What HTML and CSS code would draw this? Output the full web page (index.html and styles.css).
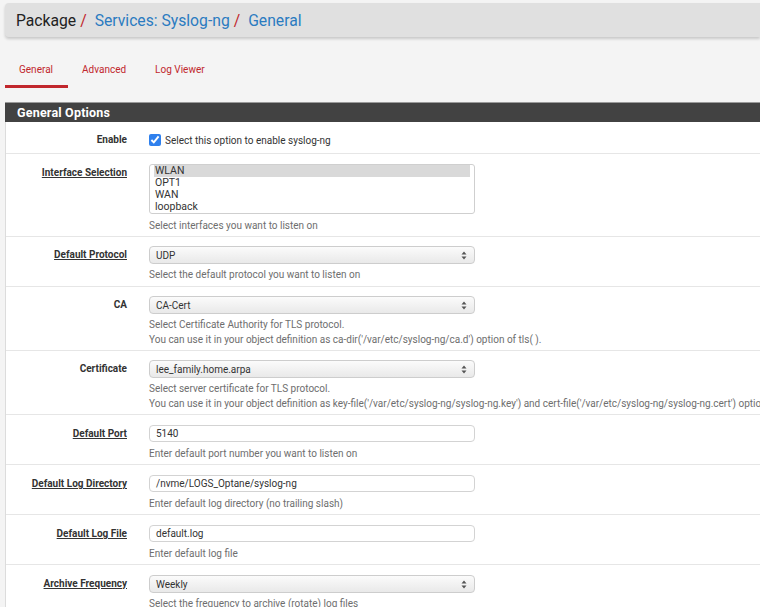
FILE: index.html
```html
<!DOCTYPE html>
<html lang="en">
<head>
<meta charset="utf-8">
<title>Services: Syslog-ng: General</title>
<link rel="stylesheet" href="styles.css">
</head>
<body>
<div class="page">
  <div class="crumbs">
    <span class="crumb plain">Package</span><span class="sep">/</span>
    <a class="crumb" href="#">Services: Syslog-ng</a><span class="sep">/</span>
    <a class="crumb" href="#">General</a>
  </div>

  <ul class="tabs">
    <li class="tab active"><a href="#">General</a></li>
    <li class="tab"><a href="#">Advanced</a></li>
    <li class="tab"><a href="#">Log Viewer</a></li>
  </ul>

  <div class="panel">
    <div class="panel-head">General Options</div>
    <div class="panel-body">
      <div class="row">
        <div class="label">Enable</div>
        <div class="ctrl">
          <label class="check"><input type="checkbox" checked> Select this option to enable syslog-ng</label>
        </div>
      </div>

      <div class="row row-list">
        <div class="label"><span class="u">Interface Selection</span></div>
        <div class="ctrl">
          <div class="listbox" role="listbox">
            <div class="opt sel">WLAN</div>
            <div class="opt">OPT1</div>
            <div class="opt">WAN</div>
            <div class="opt">loopback</div>
          </div>
          <div class="help">Select interfaces you want to listen on</div>
        </div>
      </div>

      <div class="row">
        <div class="label"><span class="u">Default Protocol</span></div>
        <div class="ctrl">
          <div class="select"><span>UDP</span><svg class="arr" width="6" height="9" viewBox="0 0 6 9"><path d="M3 0.5 L5.5 3.5 H0.5 Z M3 8.5 L5.5 5.5 H0.5 Z" fill="#555"/></svg></div>
          <div class="help">Select the default protocol you want to listen on</div>
        </div>
      </div>

      <div class="row row-two">
        <div class="label">CA</div>
        <div class="ctrl">
          <div class="select"><span>CA-Cert</span><svg class="arr" width="6" height="9" viewBox="0 0 6 9"><path d="M3 0.5 L5.5 3.5 H0.5 Z M3 8.5 L5.5 5.5 H0.5 Z" fill="#555"/></svg></div>
          <div class="help">Select Certificate Authority for TLS protocol.<br>You can use it in your object definition as ca-dir('/var/etc/syslog-ng/ca.d') option of tls( ).</div>
        </div>
      </div>

      <div class="row row-two">
        <div class="label">Certificate</div>
        <div class="ctrl">
          <div class="select"><span>lee_family.home.arpa</span><svg class="arr" width="6" height="9" viewBox="0 0 6 9"><path d="M3 0.5 L5.5 3.5 H0.5 Z M3 8.5 L5.5 5.5 H0.5 Z" fill="#555"/></svg></div>
          <div class="help">Select server certificate for TLS protocol.<br>You can use it in your object definition as key-file('/var/etc/syslog-ng/syslog-ng.key') and cert-file('/var/etc/syslog-ng/syslog-ng.cert') option of tls( ).</div>
        </div>
      </div>

      <div class="row row-input">
        <div class="label"><span class="u">Default Port</span></div>
        <div class="ctrl">
          <div class="input">5140</div>
          <div class="help">Enter default port number you want to listen on</div>
        </div>
      </div>

      <div class="row row-input">
        <div class="label"><span class="u">Default Log Directory</span></div>
        <div class="ctrl">
          <div class="input">/nvme/LOGS_Optane/syslog-ng</div>
          <div class="help">Enter default log directory (no trailing slash)</div>
        </div>
      </div>

      <div class="row row-input">
        <div class="label"><span class="u">Default Log File</span></div>
        <div class="ctrl">
          <div class="input">default.log</div>
          <div class="help">Enter default log file</div>
        </div>
      </div>

      <div class="row row-last">
        <div class="label"><span class="u">Archive Frequency</span></div>
        <div class="ctrl">
          <div class="select"><span>Weekly</span><svg class="arr" width="6" height="9" viewBox="0 0 6 9"><path d="M3 0.5 L5.5 3.5 H0.5 Z M3 8.5 L5.5 5.5 H0.5 Z" fill="#555"/></svg></div>
          <div class="help">Select the frequency to archive (rotate) log files</div>
        </div>
      </div>
    </div>
  </div>
</div>
</body>
</html>
```

FILE: styles.css
```css
html, body {
  margin: 0;
  padding: 0;
  overflow: hidden;
  background: #f4f4f4;
}
body {
  font-family: Roboto, "Liberation Sans", sans-serif;
  color: #333;
  width: 760px;
  height: 607px;
}
.page {
  padding-left: 5px;
}
.crumbs {
  margin-top: 3px;
  height: 34px;
  background: #e0e0e0;
  border-radius: 4px 0 0 4px;
  box-shadow: 0 2px 3px rgba(0, 0, 0, 0.18);
  display: flex;
  align-items: center;
  padding-left: 11px;
  font-size: 15.7px;
  white-space: nowrap;
}
.crumb {
  color: #2b7bc0;
  text-decoration: none;
}
.crumb.plain {
  color: #222;
}
.sep {
  color: #c1272d;
  margin: 0 8px 0 4px;
}
.tabs {
  list-style: none;
  margin: 15px 0 0;
  padding: 0;
  display: flex;
}
.tab a {
  display: block;
  padding: 11px 15px 8px 14px;
  font-size: 10px;
  line-height: 14px;
  color: #c1272d;
  text-decoration: none;
  border-bottom: 3px solid transparent;
}
.tab.active a {
  border-bottom-color: #c1272d;
}
.panel {
  margin-top: 14px;
  border-left: 1px solid #dcdcdc;
  background: #fff;
}
.panel-head {
  margin-left: -1px;
  height: 20px;
  background: #424242;
  border-top: 1px solid #9a9a9a;
  box-sizing: border-box;
  color: #fff;
  font-weight: bold;
  font-size: 12.5px;
  line-height: 19px;
  padding-left: 12px;
  letter-spacing: 0.2px;
}
.row {
  display: flex;
  padding: 9px 0 4px;
  border-bottom: 1px solid #e6e6e6;
}
.row-two {
  padding-bottom: 3px;
}
.row-list {
  padding: 10px 0 3px;
}
.row-input {
  padding: 10px 0 3px;
}
.row-last {
  padding-top: 10px;
}
.label {
  width: 121px;
  flex: none;
  text-align: right;
  font-weight: bold;
  font-size: 10px;
  line-height: 18px;
  color: #333;
  white-space: nowrap;
}
.u {
  text-decoration: underline;
}
.ctrl {
  margin-left: 22px;
  font-size: 10px;
  color: #444;
}
.check {
  display: flex;
  align-items: center;
  height: 18px;
  white-space: nowrap;
  color: #333;
}
.check input {
  margin: 0 4px 0 0;
  width: 12px;
  height: 12px;
  accent-color: #2f80ed;
}
.listbox {
  width: 326px;
  box-sizing: border-box;
  border: 1px solid #cfcfcf;
  border-radius: 3px;
  padding: 0 4px;
  background: #fff;
  height: 50px;
}
.opt {
  line-height: 12px;
  font-size: 10.5px;
  padding-left: 1px;
  color: #333;
}
.opt.sel {
  background: #d9d9d9;
}
.row-list .help {
  margin-top: 4px;
}
.select {
  width: 326px;
  height: 18px;
  box-sizing: border-box;
  border: 1px solid #cdcdcd;
  border-radius: 4px;
  background: linear-gradient(#fbfbfb, #e9e9e9);
  display: flex;
  align-items: center;
  justify-content: space-between;
  padding: 0 7px 0 6px;
  color: #333;
}
.arr {
  flex: none;
}
.input {
  width: 326px;
  height: 17px;
  box-sizing: border-box;
  border: 1px solid #d3d3d3;
  border-radius: 4px;
  background: #fff;
  padding-left: 6px;
  line-height: 15px;
  color: #333;
}
.row-input .help {
  margin-top: 4px;
}
.help {
  margin-top: 3px;
  line-height: 15px;
  color: #6e6e6e;
  white-space: nowrap;
}
```
